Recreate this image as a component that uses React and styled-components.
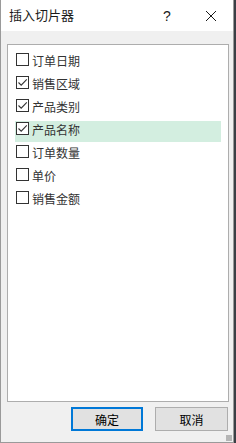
import React from "react";
import styled, { createGlobalStyle } from "styled-components";

const Global = createGlobalStyle`
  html, body { margin: 0; padding: 0; background: #3a3f45; }
  body { width: 236px; height: 443px; overflow: hidden; }
  * { box-sizing: border-box; }
`;

const Window = styled.div`
  width: 234px;
  height: 443px;
  display: flex;
  flex-direction: column;
  background: #f0f0f0;
  border: 1px solid #9a9a9a;
  border-top: none;
  font-family: "Noto Sans CJK SC", "Microsoft YaHei", sans-serif;
  position: relative;
`;

const TitleBar = styled.div`
  height: 31px;
  flex: none;
  background: #ffffff;
  display: flex;
  align-items: center;
  padding-left: 8px;
`;

const Title = styled.div`
  flex: 1;
  font-size: 13px;
  color: #1a1a1a;
  line-height: 1;
  margin-top: -2px;
`;

const TitleButton = styled.div`
  width: 44px;
  height: 31px;
  display: flex;
  align-items: center;
  justify-content: center;
  font-family: "Liberation Sans", Arial, sans-serif;
  font-size: 14px;
  color: #1a1a1a;
`;

const Body = styled.div`
  flex: 1;
  display: flex;
  flex-direction: column;
  padding: 13px 4px 0 6px;
`;

const ListBox = styled.div`
  height: 358px;
  background: #ffffff;
  border: 1px solid #adadad;
  padding: 7px 7px 0 7px;
  display: flex;
  flex-direction: column;
  gap: 2px;
`;

const Row = styled.div`
  height: 21px;
  display: flex;
  align-items: flex-start;
  padding: 1px 0 0 1px;
  background: ${(p) => (p.$active ? "#d3eee0" : "transparent")};
`;

const Box = styled.div`
  width: 13px;
  height: 13px;
  border: 1px solid #333333;
  background: #ffffff;
  flex: none;
  display: flex;
  align-items: center;
  justify-content: center;
`;

const Label = styled.span`
  margin-left: 3px;
  font-size: 12px;
  line-height: 13px;
  margin-top: 1px;
  color: #333333;
`;

const Footer = styled.div`
  display: flex;
  justify-content: flex-end;
  gap: 12px;
  padding-top: 5px;
  padding-right: 1px;
`;

const Button = styled.div`
  width: ${(p) => (p.$primary ? "72px" : "73px")};
  height: 24px;
  background: #e1e1e1;
  border: ${(p) => (p.$primary ? "2px solid #0078d7" : "1px solid #adadad")};
  display: flex;
  align-items: center;
  justify-content: center;
  font-size: 12px;
  color: #000000;
`;

const Grip = styled.div`
  position: absolute;
  right: 1px;
  bottom: 1px;
  width: 6px;
  height: 6px;
  background-image: radial-gradient(#b5b5b5 0.9px, transparent 1px);
  background-size: 2px 2px;
`;

const items = [
  { name: "订单日期", checked: false },
  { name: "销售区域", checked: true },
  { name: "产品类别", checked: true },
  { name: "产品名称", checked: true, active: true },
  { name: "订单数量", checked: false },
  { name: "单价", checked: false },
  { name: "销售金额", checked: false },
];

function Check() {
  return (
    <svg width="11" height="11" viewBox="0 0 11 11">
      <path d="M1.5 5.5 L4.2 8.2 L9.8 2.4" fill="none" stroke="#333" strokeWidth="1.1" />
    </svg>
  );
}

export default function App() {
  return (
    <>
      <Global />
      <Window>
        <TitleBar>
          <Title>插入切片器</Title>
          <TitleButton>?</TitleButton>
          <TitleButton>
            <svg width="12" height="12" viewBox="0 0 12 12">
              <path d="M1 1 L11 11 M11 1 L1 11" stroke="#1a1a1a" strokeWidth="1" />
            </svg>
          </TitleButton>
        </TitleBar>
        <Body>
          <ListBox>
            {items.map((it) => (
              <Row key={it.name} $active={it.active}>
                <Box>{it.checked && <Check />}</Box>
                <Label>{it.name}</Label>
              </Row>
            ))}
          </ListBox>
          <Footer>
            <Button $primary>确定</Button>
            <Button>取消</Button>
          </Footer>
        </Body>
        <Grip />
      </Window>
    </>
  );
}
